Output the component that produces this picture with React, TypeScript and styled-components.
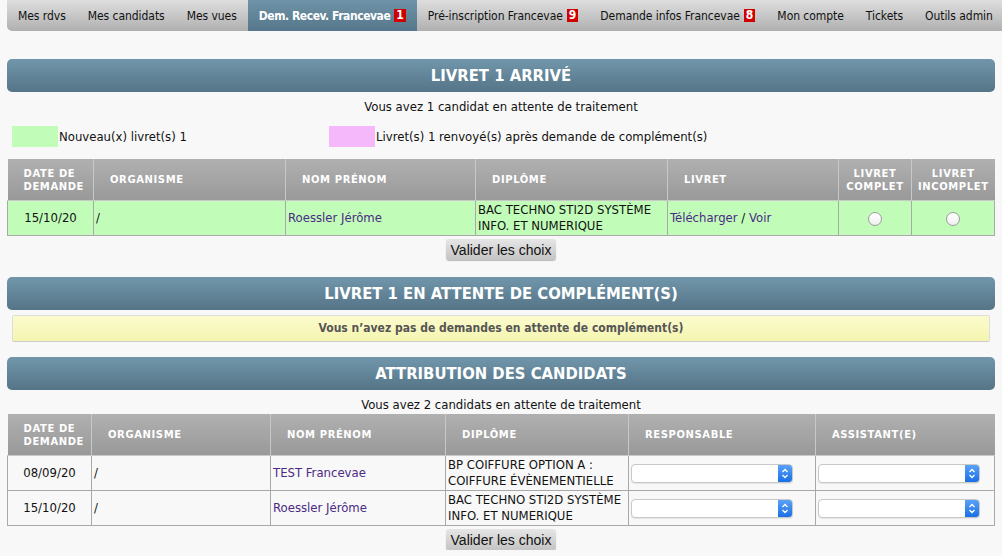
import React, { FC } from 'react';
import styled, { createGlobalStyle } from 'styled-components';

const GlobalStyle = createGlobalStyle`
  html, body {
    margin: 0;
    padding: 0;
    background: #f8f8f8;
  }
  body {
    font-family: "DejaVu Sans Condensed", "DejaVu Sans", sans-serif;
    font-size: 13px;
    color: #111;
  }
`;

const Page = styled.div`
  padding: 0 7px;
`;

const Nav = styled.nav`
  display: flex;
  height: 31px;
  margin-right: -7px;
  background: linear-gradient(#dedede, #b0b0b0);
  border-bottom-left-radius: 5px;
  overflow: hidden;
`;

const NavItem = styled.div<{ $active?: boolean }>`
  display: flex;
  align-items: center;
  padding: 0 11px;
  white-space: nowrap;
  font-size: 12px;
  letter-spacing: ${({ $active }) => ($active ? '-0.45px' : '-0.05px')};
  color: ${({ $active }) => ($active ? '#fff' : '#111')};
  font-weight: ${({ $active }) => ($active ? 'bold' : 'normal')};
  background: ${({ $active }) => ($active ? 'linear-gradient(#6f93a8, #56778b)' : 'none')};
`;

const Badge = styled.span`
  display: inline-block;
  margin-left: 4px;
  padding: 0 2px;
  min-width: 7px;
  height: 13px;
  line-height: 13px;
  background: #d00000;
  color: #fff;
  font-weight: bold;
  font-size: 12px;
  letter-spacing: 0;
  text-align: center;
`;

const SectionTitle = styled.h2<{ $top: number }>`
  margin: ${({ $top }) => $top}px 0 0;
  height: 33px;
  line-height: 33px;
  border-radius: 5px;
  background: linear-gradient(#7196ab, #557487);
  color: #fff;
  text-align: center;
  font-size: 16.5px;
  font-weight: bold;
  text-transform: uppercase;
`;

const Info = styled.p<{ $top: number }>`
  margin: ${({ $top }) => $top}px 0 0;
  text-align: center;
  line-height: 16px;
`;

const Legend = styled.div`
  display: grid;
  grid-template-columns: 317px 1fr;
  margin: 11px 0 0 5px;
`;

const LegendItem = styled.div`
  display: flex;
  align-items: center;
`;

const Swatch = styled.span<{ $color: string }>`
  width: 46px;
  height: 21px;
  margin-right: 1px;
  background: ${({ $color }) => $color};
`;

const Table = styled.table<{ $top: number }>`
  width: 100%;
  margin-top: ${({ $top }) => $top}px;
  border-collapse: collapse;
  table-layout: fixed;
`;

const Th = styled.th`
  height: 41px;
  padding: 0 8px 0 16px;
  border: 1px solid #c8c8c8;
  border-top: none;
  background: linear-gradient(#b0b0b0, #999);
  color: #fff;
  font-family: "DejaVu Sans", sans-serif;
  font-size: 10px;
  font-weight: bold;
  letter-spacing: 0.6px;
  line-height: 13px;
  text-align: left;
  text-transform: uppercase;
  &:first-child {
    border-left: none;
  }
  &:last-child {
    border-right: none;
  }
`;

const NarrowTh = styled(Th)`
  padding: 0 4px;
  text-align: center;
`;

const Tr = styled.tr<{ $bg?: string }>`
  background: ${({ $bg }) => $bg || 'transparent'};
`;

const Td = styled.td<{ $center?: boolean }>`
  height: 34px;
  padding: 0 2px;
  border: 1px solid #a9a9a9;
  text-align: ${({ $center }) => ($center ? 'center' : 'left')};
  line-height: 16px;
  vertical-align: middle;
`;

const Link = styled.a`
  color: #4b2a85;
  text-decoration: none;
`;

const Radio = styled.span`
  display: inline-block;
  width: 12px;
  height: 12px;
  border-radius: 50%;
  border: 1px solid #9a9a9a;
  background: linear-gradient(#fff, #f0f0f0);
  vertical-align: middle;
`;

const ButtonRow = styled.div`
  display: flex;
  justify-content: center;
  margin-top: 3px;
`;

const Button = styled.button`
  height: 21px;
  padding: 0 5px;
  border: none;
  border-radius: 3px;
  background: linear-gradient(#e6e6e6, #c4c4c4);
  box-shadow: 0 1px 1px rgba(0, 0, 0, 0.25);
  font-family: "Liberation Sans", Arial, sans-serif;
  font-size: 14px;
  color: #111;
`;

const Notice = styled.div`
  margin: 5px 5px 0;
  height: 25px;
  line-height: 25px;
  border: 1px solid #ddd;
  border-bottom-color: #ccc;
  border-radius: 2px;
  background: linear-gradient(#fbfbce, #f5f5b0);
  text-align: center;
  color: #555;
  font-size: 12px;
  font-weight: bold;
`;

const Select = styled.span`
  display: flex;
  width: 160px;
  height: 17px;
  border: 1px solid #c8c8c8;
  border-radius: 4px;
  background: #fff;
  overflow: hidden;
  box-shadow: 0 1px 1px rgba(0, 0, 0, 0.08);
`;

const SelectBody = styled.span`
  flex: 1;
`;

const SelectArrow = styled.span`
  display: flex;
  align-items: center;
  justify-content: center;
  width: 14px;
  background: linear-gradient(#5aa2f8, #1a6fe6);
`;

const Stepper: FC = () => (
  <svg width="8" height="11" viewBox="0 0 8 11">
    <path d="M1.5 4 L4 1.5 L6.5 4 M1.5 7 L4 9.5 L6.5 7" fill="none" stroke="#fff" strokeWidth="1.3" />
  </svg>
);

const FakeSelect: FC = () => (
  <Select>
    <SelectBody />
    <SelectArrow>
      <Stepper />
    </SelectArrow>
  </Select>
);

const navItems: { label: string; badge?: number; active?: boolean }[] = [
  { label: 'Mes rdvs' },
  { label: 'Mes candidats' },
  { label: 'Mes vues' },
  { label: 'Dem. Recev. Francevae', badge: 1, active: true },
  { label: 'Pré-inscription Francevae', badge: 9 },
  { label: 'Demande infos Francevae', badge: 8 },
  { label: 'Mon compte' },
  { label: 'Tickets' },
  { label: 'Outils admin' },
];

const attributions = [
  { date: '08/09/20', name: 'TEST Francevae', diplome: ['BP COIFFURE OPTION A :', 'COIFFURE ÉVÈNEMENTIELLE'] },
  { date: '15/10/20', name: 'Roessler Jérôme', diplome: ['BAC TECHNO STI2D SYSTÈME', 'INFO. ET NUMERIQUE'] },
];

const App: FC = () => (
  <>
    <GlobalStyle />
    <Page>
      <Nav>
        {navItems.map((item) => (
          <NavItem key={item.label} $active={item.active}>
            {item.label}
            {item.badge !== undefined && <Badge>{item.badge}</Badge>}
          </NavItem>
        ))}
      </Nav>

      <SectionTitle $top={28}>Livret 1 arrivé</SectionTitle>
      <Info $top={7}>Vous avez 1 candidat en attente de traitement</Info>
      <Legend>
        <LegendItem>
          <Swatch $color="#c1fdb9" />
          Nouveau(x) livret(s) 1
        </LegendItem>
        <LegendItem>
          <Swatch $color="#f5b9fb" />
          Livret(s) 1 renvoyé(s) après demande de complément(s)
        </LegendItem>
      </Legend>
      <Table $top={12}>
        <colgroup>
          <col style={{ width: 86 }} />
          <col style={{ width: 192 }} />
          <col style={{ width: 190 }} />
          <col style={{ width: 192 }} />
          <col style={{ width: 171 }} />
          <col style={{ width: 73 }} />
          <col />
        </colgroup>
        <thead>
          <tr>
            <Th>Date de demande</Th>
            <Th>Organisme</Th>
            <Th>Nom prénom</Th>
            <Th>Diplôme</Th>
            <Th>Livret</Th>
            <NarrowTh>Livret complet</NarrowTh>
            <NarrowTh>Livret incomplet</NarrowTh>
          </tr>
        </thead>
        <tbody>
          <Tr $bg="#c1fdb9">
            <Td $center>15/10/20</Td>
            <Td>/</Td>
            <Td><Link>Roessler Jérôme</Link></Td>
            <Td>BAC TECHNO STI2D SYSTÈME<br />INFO. ET NUMERIQUE</Td>
            <Td><Link>Télécharger</Link> / <Link>Voir</Link></Td>
            <Td $center><Radio /></Td>
            <Td $center><Radio /></Td>
          </Tr>
        </tbody>
      </Table>
      <ButtonRow>
        <Button>Valider les choix</Button>
      </ButtonRow>

      <SectionTitle $top={17}>Livret 1 en attente de complément(s)</SectionTitle>
      <Notice>Vous n’avez pas de demandes en attente de complément(s)</Notice>

      <SectionTitle $top={15}>Attribution des candidats</SectionTitle>
      <Info $top={7}>Vous avez 2 candidats en attente de traitement</Info>
      <Table $top={1}>
        <colgroup>
          <col style={{ width: 84 }} />
          <col style={{ width: 179 }} />
          <col style={{ width: 175 }} />
          <col style={{ width: 183 }} />
          <col style={{ width: 187 }} />
          <col />
        </colgroup>
        <thead>
          <tr>
            <Th>Date de demande</Th>
            <Th>Organisme</Th>
            <Th>Nom prénom</Th>
            <Th>Diplôme</Th>
            <Th>Responsable</Th>
            <Th>Assistant(e)</Th>
          </tr>
        </thead>
        <tbody>
          {attributions.map((row) => (
            <Tr key={row.date + row.name}>
              <Td $center>{row.date}</Td>
              <Td>/</Td>
              <Td><Link>{row.name}</Link></Td>
              <Td>{row.diplome[0]}<br />{row.diplome[1]}</Td>
              <Td><FakeSelect /></Td>
              <Td><FakeSelect /></Td>
            </Tr>
          ))}
        </tbody>
      </Table>
      <ButtonRow>
        <Button>Valider les choix</Button>
      </ButtonRow>
    </Page>
  </>
);

export default App;
